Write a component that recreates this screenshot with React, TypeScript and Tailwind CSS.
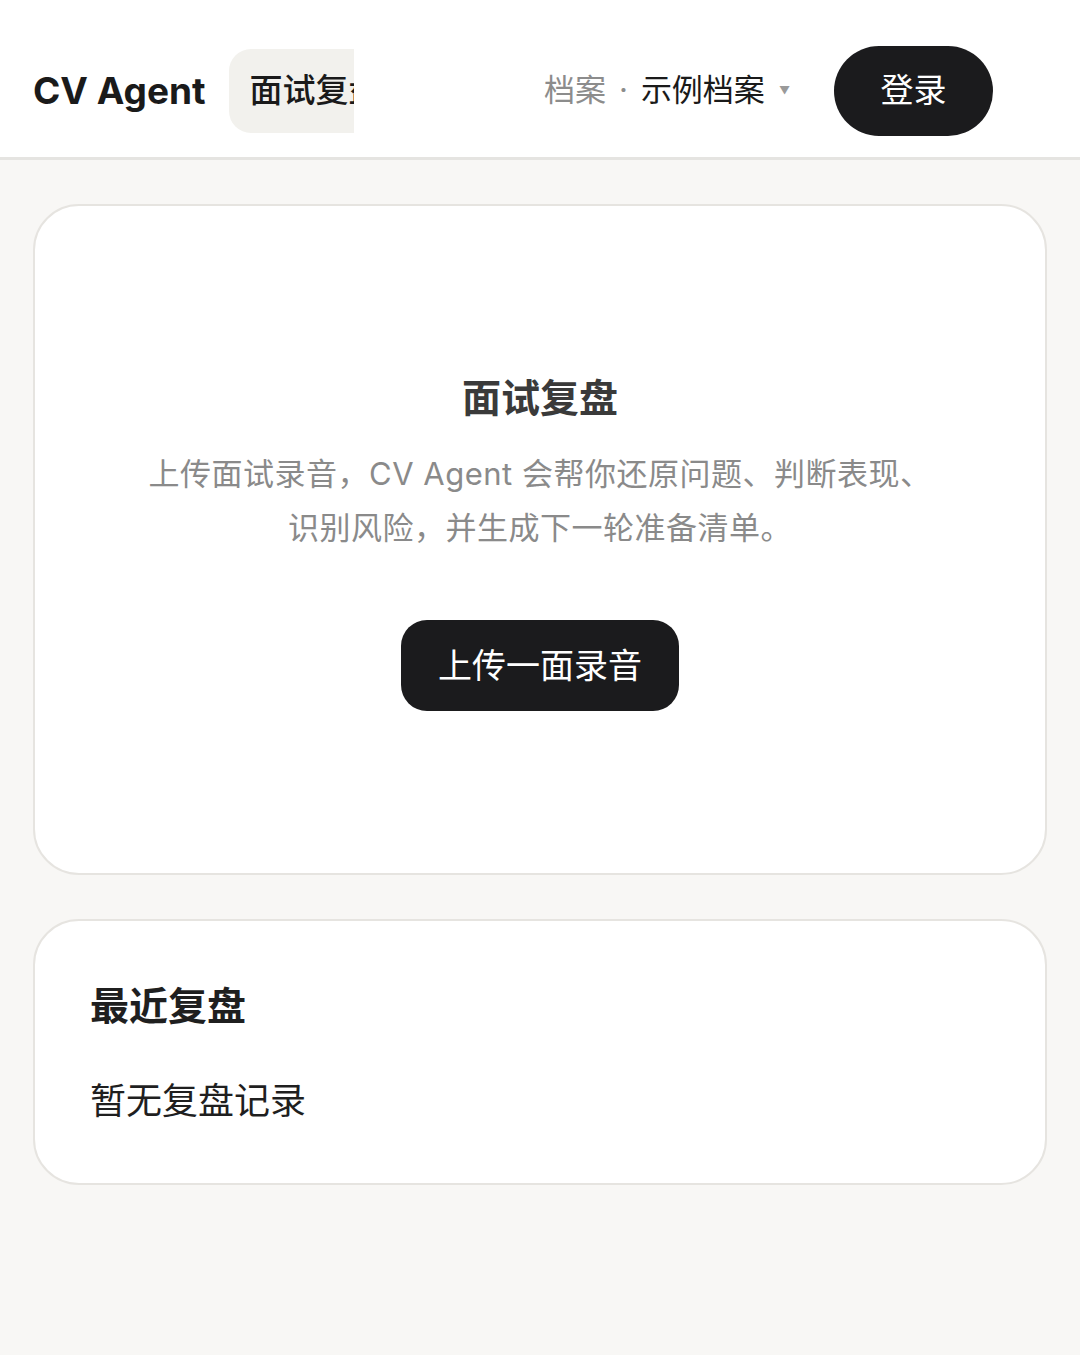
const FONT = "font-['Inter','Noto_Sans_CJK_SC',sans-serif]"

function Header() {
  return (
    <header className="flex h-[160px] items-center border-b-[3px] border-[#e5e4e1] bg-white pt-[24px] pl-[33px] pr-[87px]">
      <div className="shrink-0 text-[37px] font-bold text-[#1a1a1a]">CV Agent</div>
      <nav className="ml-[23px] w-[125px] overflow-hidden">
        <div className="flex">
          <span className="flex h-[84px] shrink-0 items-center whitespace-nowrap rounded-[22px] bg-[#f2f1ed] px-[21px] text-[33px] font-medium text-[#1a1a1a]">
            面试复盘
          </span>
        </div>
      </nav>
      <div className="ml-auto flex items-center text-[31px]">
        <span className="text-[#8c8c8c]">档案</span>
        <span className="mx-[13px] text-[#8c8c8c]">·</span>
        <span className="text-[#1a1a1a]">示例档案</span>
        <span className="ml-[14px] text-[11px] text-[#9a9a9a]">▼</span>
      </div>
      <button className="ml-[44px] flex h-[90px] w-[159px] items-center justify-center rounded-full bg-[#1b1b1d] text-[33px] text-white">
        登录
      </button>
    </header>
  )
}

export default function App() {
  return (
    <div className={`${FONT} min-h-[1355px] bg-[#f8f7f5]`}>
      <Header />
      <main className="flex flex-col gap-[44px] px-[33px] pt-[44px]">
        {/* Upload card */}
        <section className="flex flex-col items-center rounded-[46px] border-2 border-[#e6e4e0] bg-white pt-[167px] pb-[162px] text-center">
          <h1 className="text-[39px] font-semibold leading-[50px] text-[#3a3a3a]">面试复盘</h1>
          <p className="mt-[24px] max-w-[795px] text-[31px] leading-[54px] tracking-[0.5px] text-[#8a8a8a]">
            上传面试录音，CV Agent 会帮你还原问题、判断表现、识别风险，并生成下一轮准备清单。
          </p>
          <button className="mt-[65px] flex h-[91px] w-[278px] items-center justify-center rounded-[26px] bg-[#1b1b1d] text-[34px] text-white">
            上传一面录音
          </button>
        </section>

        {/* Recent reviews */}
        <section className="rounded-[46px] border-2 border-[#e6e4e0] bg-white px-[55px] pt-[59px] pb-[57px]">
          <h2 className="text-[39px] font-bold leading-[51px] text-[#1f1f1f]">最近复盘</h2>
          <div className="mt-[45px] text-[36px] leading-[50px] text-[#1f1f1f]">暂无复盘记录</div>
        </section>
      </main>
    </div>
  )
}
